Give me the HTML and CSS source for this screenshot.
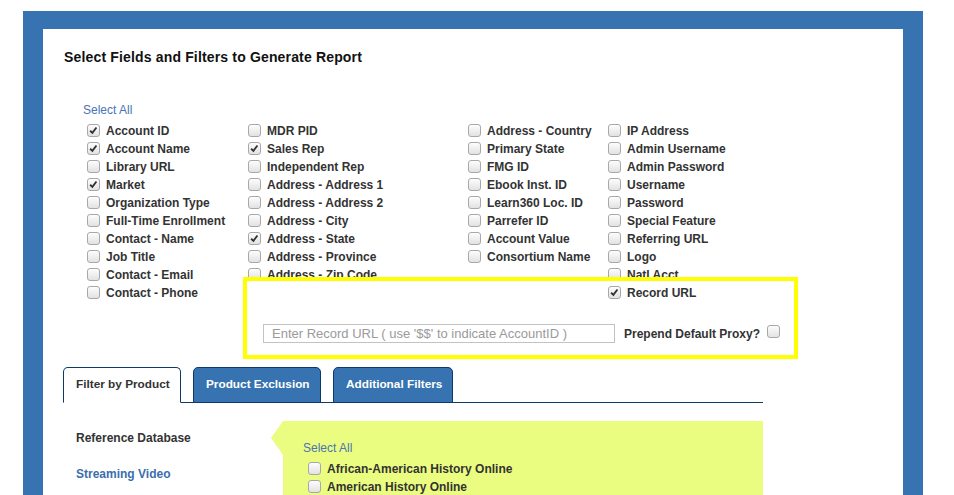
FILE: index.html
```html
<!DOCTYPE html>
<html lang="en">
<head>
    <meta charset="UTF-8">
    <meta name="viewport" content="width=device-width, initial-scale=1.0">
    <title>Generate Report</title>
    <link rel="stylesheet" href="styles.css">
</head>
<body>
    <div class="frame">
        <h3 class="title">Select Fields and Filters to Generate Report</h3>

        <a class="select-all" href="#">Select All</a>
        <div class="fields">
            <div class="col col1">
                <label class="field"><input type="checkbox" checked> Account ID</label>
                <label class="field"><input type="checkbox" checked> Account Name</label>
                <label class="field"><input type="checkbox"> Library URL</label>
                <label class="field"><input type="checkbox" checked> Market</label>
                <label class="field"><input type="checkbox"> Organization Type</label>
                <label class="field"><input type="checkbox"> Full-Time Enrollment</label>
                <label class="field"><input type="checkbox"> Contact - Name</label>
                <label class="field"><input type="checkbox"> Job Title</label>
                <label class="field"><input type="checkbox"> Contact - Email</label>
                <label class="field"><input type="checkbox"> Contact - Phone</label>
            </div>
            <div class="col col2">
                <label class="field"><input type="checkbox"> MDR PID</label>
                <label class="field"><input type="checkbox" checked> Sales Rep</label>
                <label class="field"><input type="checkbox"> Independent Rep</label>
                <label class="field"><input type="checkbox"> Address - Address 1</label>
                <label class="field"><input type="checkbox"> Address - Address 2</label>
                <label class="field"><input type="checkbox"> Address - City</label>
                <label class="field"><input type="checkbox" checked> Address - State</label>
                <label class="field"><input type="checkbox"> Address - Province</label>
                <label class="field"><input type="checkbox"> Address - Zip Code</label>
            </div>
            <div class="col col3">
                <label class="field"><input type="checkbox"> Address - Country</label>
                <label class="field"><input type="checkbox"> Primary State</label>
                <label class="field"><input type="checkbox"> FMG ID</label>
                <label class="field"><input type="checkbox"> Ebook Inst. ID</label>
                <label class="field"><input type="checkbox"> Learn360 Loc. ID</label>
                <label class="field"><input type="checkbox"> Parrefer ID</label>
                <label class="field"><input type="checkbox"> Account Value</label>
                <label class="field"><input type="checkbox"> Consortium Name</label>
            </div>
            <div class="col col4">
                <label class="field"><input type="checkbox"> IP Address</label>
                <label class="field"><input type="checkbox"> Admin Username</label>
                <label class="field"><input type="checkbox"> Admin Password</label>
                <label class="field"><input type="checkbox"> Username</label>
                <label class="field"><input type="checkbox"> Password</label>
                <label class="field"><input type="checkbox"> Special Feature</label>
                <label class="field"><input type="checkbox"> Referring URL</label>
                <label class="field"><input type="checkbox"> Logo</label>
                <label class="field"><input type="checkbox"> Natl Acct</label>
            </div>
        </div>

        <div class="highlight">
            <label class="field record-field"><input type="checkbox" checked> Record URL</label>
            <div class="record-row">
                <input type="text" class="record-input" placeholder="Enter Record URL ( use '$$' to indicate AccountID )">
                <label class="proxy">Prepend Default Proxy? <input type="checkbox"></label>
            </div>
        </div>

        <ul class="tabs">
            <li class="tab active">Filter by Product</li>
            <li class="tab">Product Exclusion</li>
            <li class="tab">Additional Filters</li>
        </ul>

        <div class="product-filter">
            <div class="categories">
                <div class="category current">Reference Database</div>
                <div class="category">Streaming Video</div>
            </div>
            <div class="panel">
                <a class="select-all" href="#">Select All</a>
                <div class="products">
                    <label class="field"><input type="checkbox"> African-American History Online</label>
                    <label class="field"><input type="checkbox"> American History Online</label>
                </div>
            </div>
        </div>
    </div>
</body>
</html>
```

FILE: styles.css
```css
html, body {
    overflow: hidden;
}
body {
    margin: 0;
    font-family: "Liberation Sans", Arial, sans-serif;
    color: #333;
    background: #fff;
}
.frame {
    width: 839px;
    margin: 11px 0 0 23px;
    border: solid #3673b0;
    border-width: 18px 20px 0;
    padding: 19px 0 40px 21px;
    background: #fff;
}
.title {
    margin: 0;
    font-size: 14px;
    line-height: 18px;
    letter-spacing: 0.16px;
    color: #111;
}
.select-all {
    display: block;
    margin: 35px 0 3px 19px;
    font-size: 12px;
    line-height: 18px;
    color: #4a74b4;
    text-decoration: none;
}
.fields {
    display: flex;
    margin-left: 23px;
}
.col1 { width: 161px; }
.col2 { width: 220px; }
.col3 { width: 140px; }
.field {
    display: flex;
    align-items: center;
    height: 18px;
    font-size: 12px;
    font-weight: bold;
    color: #333;
    white-space: nowrap;
}
input[type="checkbox"] {
    -webkit-appearance: none;
    appearance: none;
    width: 13px;
    height: 13px;
    margin: -2px 6px 0 0;
    border: 1px solid #a8a8a8;
    border-radius: 3px;
    background: linear-gradient(#fdfdfd, #e2e2e2);
    flex-shrink: 0;
}
input[type="checkbox"]:checked {
    background: url("data:image/svg+xml,%3Csvg xmlns='http://www.w3.org/2000/svg' viewBox='0 0 13 13'%3E%3Cpath d='M2.5 6.8 L5.2 9.3 L10 3' fill='none' stroke='%23333' stroke-width='2.2'/%3E%3C/svg%3E") center / 11px 11px no-repeat, linear-gradient(#fdfdfd, #e2e2e2);
}
.highlight {
    position: relative;
    z-index: 1;
    box-sizing: border-box;
    width: 555px;
    margin: -25px 0 0 179px;
    padding: 3px 0 12px;
    border: 4px solid #ffff00;
    background: #fff;
}
.record-field {
    padding-left: 361px;
}
.record-row {
    display: flex;
    align-items: center;
    margin-top: 22px;
    padding-left: 16px;
}
.record-input {
    box-sizing: border-box;
    width: 352px;
    height: 19px;
    margin: 0 9px 0 0;
    padding: 0 8px;
    border: 1px solid #c3c3c3;
    font-family: "Liberation Sans", Arial, sans-serif;
    font-size: 13px;
    color: #333;
}
.record-input::placeholder {
    color: #9a9a9a;
}
.proxy {
    display: flex;
    align-items: center;
    font-size: 12px;
    font-weight: bold;
}
.proxy input[type="checkbox"] {
    margin: -4px 0 0 7px;
}
.tabs {
    display: flex;
    gap: 12px;
    width: 700px;
    margin: 8px 0 0 -1px;
    padding: 0;
    list-style: none;
    border-bottom: 1px solid #0e3a6b;
}
.tab {
    box-sizing: border-box;
    height: 36px;
    margin-bottom: -1px;
    padding: 0 12px;
    border: 1px solid #0e3a6b;
    border-radius: 5px 5px 0 0;
    background: #3673b0;
    color: #fff;
    font-size: 11.8px;
    font-weight: bold;
    line-height: 33px;
    text-align: center;
    white-space: nowrap;
}
.tab:nth-child(2) { width: 128px; }
.tab:nth-child(3) { width: 120px; }
.tab.active {
    width: 118px;
    background: #fff;
    color: #333;
    border-bottom-color: #fff;
}
.product-filter {
    display: flex;
    margin-top: 18px;
    margin-left: -1px;
}
.categories {
    width: 207px;
    padding: 8px 0 0 13px;
}
.category {
    height: 36px;
    font-size: 12px;
    font-weight: bold;
    line-height: 18px;
    color: #3a6ead;
}
.category.current {
    color: #333;
}
.panel {
    position: relative;
    width: 460px;
    padding: 18px 0 30px 20px;
    background: #ebfd80;
}
.panel::before {
    content: "";
    position: absolute;
    left: -12px;
    top: 0;
    border-style: solid;
    border-width: 17px 12px 17px 0;
    border-color: transparent #ebfd80 transparent transparent;
}
.panel .select-all {
    margin: 0 0 3px;
}
.products {
    margin-left: 5px;
}
```
